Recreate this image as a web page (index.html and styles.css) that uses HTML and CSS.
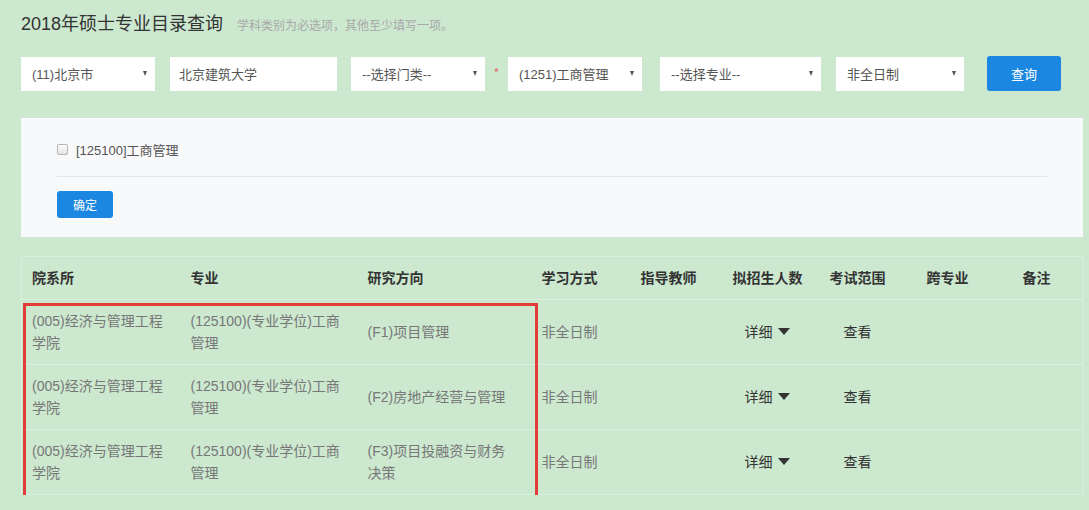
FILE: index.html
```html
<!DOCTYPE html>
<html lang="zh-CN">
<head>
<meta charset="utf-8">
<title>2018年硕士专业目录查询</title>
<link rel="stylesheet" href="styles.css">
</head>
<body>
<div class="page">
  <div class="heading">
    <h1 class="title">2018年硕士专业目录查询</h1>
    <span class="hint">学科类别为必选项，其他至少填写一项。</span>
  </div>

  <div class="filters">
    <div class="select w-province"><span>(11)北京市</span><i class="caret"></i></div>
    <div class="textbox w-school">北京建筑大学</div>
    <div class="select w-cat"><span>--选择门类--</span><i class="caret"></i></div>
    <span class="req">*</span>
    <div class="select w-subject"><span>(1251)工商管理</span><i class="caret"></i></div>
    <div class="select w-major"><span>--选择专业--</span><i class="caret"></i></div>
    <div class="select w-mode"><span>非全日制</span><i class="caret"></i></div>
    <button class="btn btn-query">查询</button>
  </div>

  <div class="panel">
    <label class="check"><span class="box"></span>[125100]工商管理</label>
    <div class="divider"></div>
    <button class="btn btn-ok">确定</button>
  </div>

  <div class="results">
    <table class="grid">
      <colgroup>
        <col class="c1"><col class="c2"><col class="c3"><col class="c4"><col class="c5"><col class="c6"><col class="c7"><col class="c8"><col class="c9">
      </colgroup>
      <thead>
        <tr>
          <th>院系所</th><th>专业</th><th>研究方向</th><th>学习方式</th><th>指导教师</th><th>拟招生人数</th><th>考试范围</th><th>跨专业</th><th>备注</th>
        </tr>
      </thead>
      <tbody>
        <tr>
          <td>(005)经济与管理工程学院</td>
          <td>(125100)(专业学位)工商管理</td>
          <td class="dir">(F1)项目管理</td>
          <td>非全日制</td>
          <td></td>
          <td class="more">详细 <svg class="tri" viewBox="0 0 12 7" width="12" height="7"><path d="M0 0H12L6 7Z"/></svg></td>
          <td class="view">查看</td>
          <td></td>
          <td></td>
        </tr>
        <tr>
          <td>(005)经济与管理工程学院</td>
          <td>(125100)(专业学位)工商管理</td>
          <td class="dir">(F2)房地产经营与管理</td>
          <td>非全日制</td>
          <td></td>
          <td class="more">详细 <svg class="tri" viewBox="0 0 12 7" width="12" height="7"><path d="M0 0H12L6 7Z"/></svg></td>
          <td class="view">查看</td>
          <td></td>
          <td></td>
        </tr>
        <tr>
          <td>(005)经济与管理工程学院</td>
          <td>(125100)(专业学位)工商管理</td>
          <td class="dir">(F3)项目投融资与财务决策</td>
          <td>非全日制</td>
          <td></td>
          <td class="more">详细 <svg class="tri" viewBox="0 0 12 7" width="12" height="7"><path d="M0 0H12L6 7Z"/></svg></td>
          <td class="view">查看</td>
          <td></td>
          <td></td>
        </tr>
      </tbody>
    </table>
    <div class="highlight"></div>
  </div>
</div>
</body>
</html>
```

FILE: styles.css
```css
html, body {
  margin: 0;
  padding: 0;
  background: #cce8cf;
}
body {
  font-family: "Liberation Sans", "Noto Sans CJK SC", sans-serif;
  font-size: 13px;
  color: #333;
}
.page {
  padding: 12px 6px 0 21px;
}
.heading {
  display: flex;
  align-items: baseline;
  height: 24px;
}
.title {
  margin: 0;
  font-size: 18px;
  font-weight: normal;
  line-height: 24px;
  color: #333;
}
.hint {
  margin-left: 14px;
  font-size: 12px;
  color: #a9a9a9;
}

.filters {
  display: flex;
  align-items: center;
  margin-top: 20px;
  height: 35px;
}
.select, .textbox {
  box-sizing: border-box;
  height: 34px;
  background: #fff;
  display: flex;
  align-items: center;
  justify-content: space-between;
  padding: 0 8px 0 11px;
  color: #555;
  font-size: 13px;
}
.textbox { padding-left: 9px; }
.caret {
  width: 0;
  height: 0;
  border-left: 2.5px solid transparent;
  border-right: 2.5px solid transparent;
  border-top: 5px solid #555;
}
.w-province { width: 134px; }
.w-school { width: 167px; margin-left: 15px; }
.w-cat { width: 134px; margin-left: 14px; }
.req {
  color: #e25b5b;
  font-size: 11px;
  width: 23px;
  text-align: center;
  align-self: center;
  margin-top: -4px;
}
.w-subject { width: 134px; }
.w-major { width: 161px; margin-left: 18px; }
.w-mode { width: 128px; margin-left: 15px; }

.btn {
  border: 0;
  border-radius: 3px;
  background: #1b87e0;
  color: #fff;
  font-family: inherit;
  cursor: pointer;
  padding: 0;
}
.btn-query {
  width: 74px;
  height: 35px;
  margin-left: 23px;
  font-size: 13px;
}

.panel {
  margin-top: 27px;
  width: 1062px;
  box-sizing: border-box;
  background: #f8f9fa;
  padding: 20px 36px 19px;
}
.check {
  display: flex;
  align-items: center;
  height: 22px;
  color: #555;
  font-size: 13px;
}
.box {
  box-sizing: border-box;
  width: 11px;
  height: 11px;
  border: 1px solid #b4b4b4;
  border-radius: 2px;
  background: linear-gradient(#fdfdfd, #e4e4e4);
  margin-right: 8px;
}
.divider {
  height: 1px;
  background: #e6e7e8;
  margin-top: 16px;
}
.btn-ok {
  display: block;
  margin-top: 14px;
  width: 56px;
  height: 27px;
  font-size: 12px;
}

.results {
  position: relative;
  margin-top: 19px;
  width: 1062px;
}
.grid {
  width: 1062px;
  table-layout: fixed;
  border-collapse: collapse;
  border: 1px solid #d9eedb;
}
.c1 { width: 159px; }
.c2 { width: 177px; }
.c3 { width: 174px; }
.c4 { width: 99px; }
.c5 { width: 92px; }
.c6 { width: 97px; }
.c7 { width: 97px; }
.c8 { width: 96px; }
.c9 { width: 71px; }
.grid th, .grid td {
  text-align: left;
  vertical-align: middle;
  padding: 10px 10px;
  line-height: 22px;
  font-size: 14px;
}
.grid th {
  font-weight: bold;
  color: #333;
  border-bottom: 1px solid #dcefdd;
}
.grid td {
  color: #777;
  border-top: 1px solid #dcefdd;
}
.grid td.dir {
  padding-right: 16px;
}
.grid td.more {
  color: #333;
  padding-left: 22px;
}
.grid td.view {
  color: #333;
  padding-left: 24px;
}
.tri {
  fill: #333;
  vertical-align: 2px;
  margin-left: 2px;
}
.highlight {
  position: absolute;
  left: 2px;
  top: 47px;
  width: 515px;
  height: 197px;
  box-sizing: border-box;
  border: 3px solid #e43b3b;
  pointer-events: none;
}
```
